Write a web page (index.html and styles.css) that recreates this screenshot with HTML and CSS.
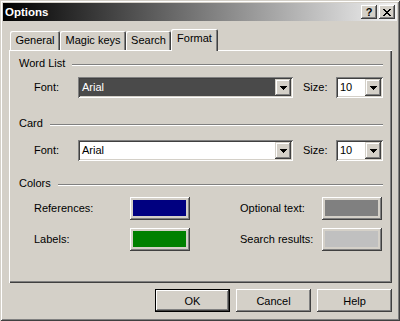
FILE: index.html
```html
<!DOCTYPE html>
<html lang="en">
<head>
    <meta charset="UTF-8">
    <title>Options</title>
    <link rel="stylesheet" href="styles.css">
</head>
<body>
    <div class="window">
        <div class="titlebar">
            <span class="title">Options</span>
            <div class="caption-buttons">
                <span class="cap-btn">?</span>
                <span class="cap-btn">
                    <svg width="8" height="7" viewBox="0 0 8 7" shape-rendering="crispEdges"><path d="M0 0h2v1h-2zM6 0h2v1h-2zM1 1h2v1h-2zM5 1h2v1h-2zM2 2h4v1h-4zM3 3h2v1h-2zM2 4h4v1h-4zM1 5h2v1h-2zM5 5h2v1h-2zM0 6h2v1h-2zM6 6h2v1h-2z" fill="#000"/></svg>
                </span>
            </div>
        </div>

        <div class="tabs">
            <div class="tab tab-general">General</div>
            <div class="tab tab-magic">Magic keys</div>
            <div class="tab tab-search">Search</div>
            <div class="tab tab-format active">Format</div>
        </div>

        <div class="panel">
            <div class="group-head head-wordlist"><span>Word List</span><i class="rule"></i></div>
            <div class="font-row row-wordlist">
                <span class="row-label">Font:</span>
                <div class="combo combo-font">
                    <span class="combo-text selected">Arial</span>
                    <span class="drop-btn"><svg width="7" height="4" viewBox="0 0 7 4" shape-rendering="crispEdges"><path d="M0 0h7v1h-1v1h-1v1h-1v1h-1v-1h-1v-1h-1v-1h-1z" fill="#000"/></svg></span>
                </div>
                <span class="size-label">Size:</span>
                <div class="combo combo-size">
                    <span class="combo-text">10</span>
                    <span class="drop-btn"><svg width="7" height="4" viewBox="0 0 7 4" shape-rendering="crispEdges"><path d="M0 0h7v1h-1v1h-1v1h-1v1h-1v-1h-1v-1h-1v-1h-1z" fill="#000"/></svg></span>
                </div>
            </div>

            <div class="group-head head-card"><span>Card</span><i class="rule"></i></div>
            <div class="font-row row-card">
                <span class="row-label">Font:</span>
                <div class="combo combo-font">
                    <span class="combo-text">Arial</span>
                    <span class="drop-btn"><svg width="7" height="4" viewBox="0 0 7 4" shape-rendering="crispEdges"><path d="M0 0h7v1h-1v1h-1v1h-1v1h-1v-1h-1v-1h-1v-1h-1z" fill="#000"/></svg></span>
                </div>
                <span class="size-label">Size:</span>
                <div class="combo combo-size">
                    <span class="combo-text">10</span>
                    <span class="drop-btn"><svg width="7" height="4" viewBox="0 0 7 4" shape-rendering="crispEdges"><path d="M0 0h7v1h-1v1h-1v1h-1v1h-1v-1h-1v-1h-1v-1h-1z" fill="#000"/></svg></span>
                </div>
            </div>

            <div class="group-head head-colors"><span>Colors</span><i class="rule"></i></div>
            <div class="colors">
                <span class="row-label">References:</span>
                <span class="swatch-btn"><i class="swatch navy"></i></span>
                <span class="row-label">Optional text:</span>
                <span class="swatch-btn"><i class="swatch grey"></i></span>
                <span class="row-label">Labels:</span>
                <span class="swatch-btn"><i class="swatch green"></i></span>
                <span class="row-label">Search results:</span>
                <span class="swatch-btn"><i class="swatch silver"></i></span>
            </div>
        </div>

        <div class="buttons">
            <button class="btn default"><span>OK</span></button>
            <button class="btn"><span>Cancel</span></button>
            <button class="btn"><span>Help</span></button>
        </div>
    </div>
</body>
</html>
```

FILE: styles.css
```css
* {
    box-sizing: border-box;
}
body {
    margin: 0;
    background: #d4d0c8;
    font-family: "Liberation Sans", Arial, sans-serif;
    font-size: 11px;
    line-height: 13px;
    color: #000;
}
.window {
    width: 400px;
    height: 321px;
    padding: 3px;
    background: #d4d0c8;
    box-shadow: inset 1px 1px #d4d0c8, inset -1px -1px #404040, inset 2px 2px #fff, inset -2px -2px #808080;
    display: flex;
    flex-direction: column;
}

/* title bar */
.titlebar {
    height: 18px;
    display: flex;
    align-items: center;
    padding: 0 2px;
    background: linear-gradient(to right, #000 0%, #f2f2f2 100%);
}
.title {
    color: #fff;
    font-weight: bold;
    font-size: 11.5px;
}
.caption-buttons {
    margin-left: auto;
    display: flex;
    gap: 2px;
}
.cap-btn {
    width: 16px;
    height: 14px;
    display: flex;
    align-items: center;
    justify-content: center;
    background: #d4d0c8;
    font-weight: bold;
    font-size: 11px;
    box-shadow: inset -1px -1px #404040, inset 1px 1px #fff, inset -2px -2px #808080, inset 2px 2px #d4d0c8;
}

/* tabs */
.tabs {
    display: flex;
    align-items: flex-end;
    height: 21px;
    margin: 8px 0 0 7px;
    position: relative;
    z-index: 1;
}
.tab {
    height: 19px;
    padding-top: 3px;
    text-align: center;
    background: #d4d0c8;
    border-radius: 2px 2px 0 0;
    box-shadow: inset 1px 1px #fff, inset -1px 0 #404040, inset -2px 0 #808080;
}
.tab-general { width: 50px; }
.tab-magic { width: 66px; }
.tab-search { width: 45px; }
.tab-format { width: 47px; }
.tab.active {
    height: 22px;
    margin-bottom: -1px;
}

/* panel */
.panel {
    width: 383px;
    height: 233px;
    margin-left: 6px;
    padding: 7px 9px 0 10px;
    box-shadow: inset 1px 1px #fff, inset -1px -1px #404040, inset -2px -2px #808080;
}
.group-head {
    display: flex;
    align-items: flex-start;
    height: 13px;
}
.rule {
    flex: 1;
    height: 2px;
    margin: 7px 0 0 7px;
    border-top: 1px solid #808080;
    border-bottom: 1px solid #fff;
}
.head-card { margin-top: 19px; }
.head-colors { margin-top: 16px; }

.font-row {
    display: flex;
    align-items: center;
    height: 21px;
    padding-left: 15px;
}
.row-wordlist { margin-top: 7px; }
.row-card { margin-top: 10px; }
.font-row .row-label {
    width: 44px;
}
.size-label {
    width: 33px;
    margin-left: 10px;
}

.combo {
    height: 21px;
    padding: 2px;
    display: flex;
    background: #fff;
    box-shadow: inset 1px 1px #808080, inset -1px -1px #fff, inset 2px 2px #404040, inset -2px -2px #d4d0c8;
}
.combo-font { width: 215px; }
.combo-size { width: 47px; }
.combo-text {
    flex: 1;
    display: flex;
    align-items: center;
    padding-left: 2px;
}
.combo-text.selected {
    background: #4a4a4a;
    color: #fff;
}
.drop-btn {
    width: 16px;
    height: 17px;
    display: flex;
    align-items: center;
    justify-content: center;
    background: #d4d0c8;
    box-shadow: inset -1px -1px #404040, inset 1px 1px #d4d0c8, inset -2px -2px #808080, inset 2px 2px #fff;
}

/* colours */
.colors {
    display: grid;
    grid-template-columns: 96px 110px 82px 60px;
    grid-auto-rows: 23px;
    row-gap: 8px;
    align-items: center;
    margin-top: 7px;
    padding-left: 15px;
}
.swatch-btn {
    width: 60px;
    height: 23px;
    padding: 3px;
    display: flex;
    background: #d4d0c8;
    box-shadow: inset -1px -1px #404040, inset 1px 1px #fff, inset -2px -2px #808080, inset 2px 2px #d4d0c8;
}
.swatch {
    flex: 1;
    margin-right: 1px;
    margin-bottom: 1px;
}
.navy { background: #000080; }
.green { background: #008000; }
.grey { background: #808080; }
.silver { background: #c0c0c0; }

/* dialog buttons */
.buttons {
    display: flex;
    justify-content: flex-end;
    gap: 6px;
    margin: 6px 5px 0 0;
}
.btn {
    width: 75px;
    height: 23px;
    padding: 0;
    border: none;
    font-family: inherit;
    font-size: 11px;
    color: #000;
    background: #d4d0c8;
    box-shadow: inset -1px -1px #404040, inset 1px 1px #fff, inset -2px -2px #808080, inset 2px 2px #d4d0c8;
}
.btn.default {
    box-shadow: inset 0 0 0 1px #000, inset -2px -2px #404040, inset 2px 2px #fff, inset -3px -3px #808080;
}
```
